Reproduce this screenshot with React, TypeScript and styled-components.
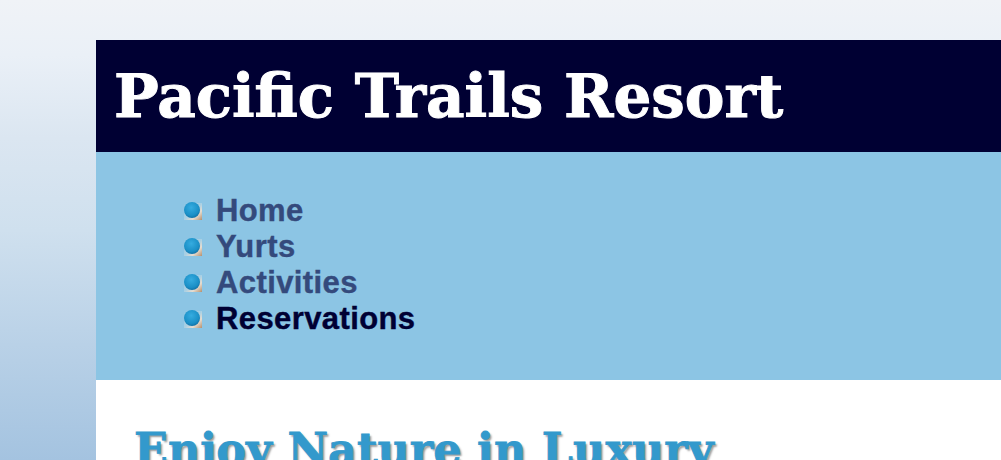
import React from 'react';
import styled, { createGlobalStyle } from 'styled-components';

const GlobalStyle = createGlobalStyle`
  html, body {
    margin: 0;
    height: 100%;
    overflow: hidden;
  }
  body {
    background: linear-gradient(180deg, #f0f3f7 0%, #eaf0f7 12%, #dbe6f1 30%, #cfe0ee 50%, #b9d1e7 75%, #a4c3e0 100%);
    height: 460px;
  }
`;

const Wrapper = styled.div`
  margin: 40px 0 0 96px;
  background: #ffffff;
  height: 420px;
  overflow: hidden;
`;

const Header = styled.header`
  background: #000033;
  height: 112px;
  box-sizing: border-box;
  padding: 20px 0 0 18px;
`;

const Title = styled.h1`
  margin: 0;
  color: #ffffff;
  font: bold 59.5px/72px "DejaVu Serif", Georgia, serif;
  -webkit-text-stroke: 1px #ffffff;
  white-space: nowrap;
`;

const Nav = styled.nav`
  background: #8cc5e4;
  height: 228px;
  box-sizing: border-box;
  padding-top: 41px;
`;

const NavList = styled.ul`
  list-style: none;
  margin: 0;
  padding: 0 0 0 87px;
`;

const NavItem = styled.li`
  display: flex;
  align-items: center;
  gap: 13px;
  height: 36px;
`;

const NavLink = styled.a<{ $current?: boolean }>`
  color: ${({ $current }) => ($current ? '#000033' : '#344a7c')};
  font: bold 31px/36px "Liberation Sans", Arial, sans-serif;
  letter-spacing: 0.4px;
  -webkit-text-stroke: 0.4px currentColor;
  text-decoration: none;
`;

const Main = styled.main`
  padding: 41px 0 0 38px;
`;

const Heading = styled.h2`
  margin: 0;
  color: #3399cc;
  font: bold 44.5px/56px "DejaVu Serif", Georgia, serif;
  -webkit-text-stroke: 0.8px #3399cc;
  white-space: nowrap;
  text-shadow: 2px 2px 2px #999999;
`;

const Bullet = () => (
  <svg width="20" height="20" viewBox="0 0 20 20" aria-hidden="true">
    <defs>
      <radialGradient id="ball" cx="0.45" cy="0.35" r="0.7">
        <stop offset="0" stopColor="#35ace0" />
        <stop offset="0.7" stopColor="#1a8fc6" />
        <stop offset="1" stopColor="#0f6a9e" />
      </radialGradient>
      <linearGradient id="shade" x1="0" y1="0" x2="1" y2="1">
        <stop offset="0" stopColor="#8cc5e4" />
        <stop offset="0.5" stopColor="#a9d0e4" />
        <stop offset="0.72" stopColor="#e6dccf" />
        <stop offset="1" stopColor="#b58f6d" />
      </linearGradient>
    </defs>
    <rect x="1" y="2" width="18" height="17" fill="url(#shade)" />
    <circle cx="9" cy="9" r="8" fill="url(#ball)" />
  </svg>
);

const links = ['Home', 'Yurts', 'Activities', 'Reservations'];

const App = () => (
  <>
    <GlobalStyle />
    <Wrapper>
      <Header>
        <Title>Pacific Trails Resort</Title>
      </Header>
      <Nav>
        <NavList>
          {links.map((link) => (
            <NavItem key={link}>
              <Bullet />
              <NavLink href="#" $current={link === 'Reservations'}>
                {link}
              </NavLink>
            </NavItem>
          ))}
        </NavList>
      </Nav>
      <Main>
        <Heading>Enjoy Nature in Luxury</Heading>
      </Main>
    </Wrapper>
  </>
);

export default App;
